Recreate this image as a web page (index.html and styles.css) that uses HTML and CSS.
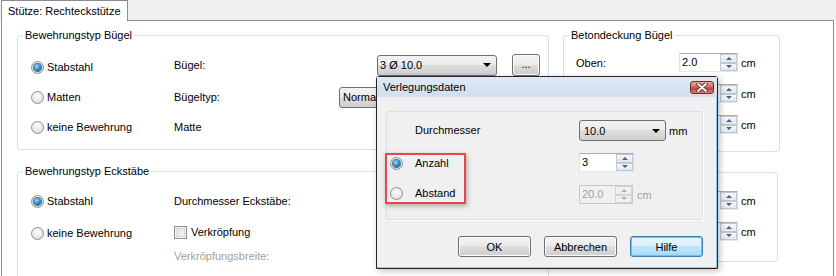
FILE: index.html
```html
<!DOCTYPE html>
<html lang="de">
<head>
    <meta charset="UTF-8">
    <title>Stütze: Rechteckstütze</title>
    <link rel="stylesheet" href="styles.css">
</head>
<body>
    <div class="window">
        <div class="tabs">
            <div class="tab">Stütze: Rechteckstütze</div>
        </div>
        <div class="panel">
            <div class="groups">
                <fieldset class="group group-buegel">
                    <legend>Bewehrungstyp Bügel</legend>
                    <div class="row row-first">
                        <label class="opt"><span class="radio on"></span>Stabstahl</label>
                        <span class="lbl lbl-buegel">Bügel:</span>
                        <span class="combo combo-stab">3 Ø 10.0</span>
                        <span class="btn btn-more">...</span>
                    </div>
                    <div class="row">
                        <label class="opt"><span class="radio"></span>Matten</label>
                        <span class="lbl lbl-typ">Bügeltyp:</span>
                        <span class="combo combo-typ">Normal</span>
                    </div>
                    <div class="row">
                        <label class="opt"><span class="radio"></span>keine Bewehrung</label>
                        <span class="lbl lbl-matte">Matte</span>
                    </div>
                </fieldset>

                <fieldset class="group group-deckung">
                    <legend>Betondeckung Bügel</legend>
                    <div class="field">
                        <span class="field-lbl">Oben:</span>
                        <span class="spin"><span class="spin-text">2.0</span><span class="spin-btns"><span class="spin-up"></span><span class="spin-down"></span></span></span>
                        <span class="unit">cm</span>
                    </div>
                    <!-- die folgenden Zeilen liegen unter dem Dialog -->
                    <div class="field">
                        <span class="field-lbl"></span>
                        <span class="spin"><span class="spin-text"></span><span class="spin-btns"><span class="spin-up"></span><span class="spin-down"></span></span></span>
                        <span class="unit">cm</span>
                    </div>
                    <div class="field field-last">
                        <span class="field-lbl"></span>
                        <span class="spin"><span class="spin-text"></span><span class="spin-btns"><span class="spin-up"></span><span class="spin-down"></span></span></span>
                        <span class="unit">cm</span>
                    </div>
                </fieldset>

                <fieldset class="group group-eck">
                    <legend>Bewehrungstyp Eckstäbe</legend>
                    <div class="eck">
                        <div class="eck-opts">
                            <label class="opt"><span class="radio on"></span>Stabstahl</label>
                            <label class="opt opt-second"><span class="radio"></span>keine Bewehrung</label>
                        </div>
                        <div class="eck-right">
                            <span class="lbl">Durchmesser Eckstäbe:</span>
                            <label class="chk-row"><span class="check"></span>Verkröpfung</label>
                            <span class="lbl lbl-off">Verkröpfungsbreite:</span>
                        </div>
                    </div>
                </fieldset>

                <fieldset class="group group-deckung2">
                    <div class="field">
                        <span class="field-lbl"></span>
                        <span class="spin"><span class="spin-text"></span><span class="spin-btns"><span class="spin-up"></span><span class="spin-down"></span></span></span>
                        <span class="unit">cm</span>
                    </div>
                    <div class="field field-wide">
                        <span class="field-lbl"></span>
                        <span class="spin"><span class="spin-text"></span><span class="spin-btns"><span class="spin-up"></span><span class="spin-down"></span></span></span>
                        <span class="unit">cm</span>
                    </div>
                </fieldset>
            </div>
        </div>

        <!-- modaler Dialog über dem Register -->
        <div class="dialog">
            <div class="dlg-title">
                <span>Verlegungsdaten</span>
                <span class="dlg-close">
                    <svg width="14" height="9" viewBox="0 0 14 9">
                        <path d="M3 1 L11 8 M11 1 L3 8" stroke="#5a2a24" stroke-width="3.6" stroke-linecap="round"/>
                        <path d="M3 1 L11 8 M11 1 L3 8" stroke="#fff" stroke-width="1.8" stroke-linecap="round"/>
                    </svg>
                </span>
            </div>
            <div class="dlg-body">
                <div class="dlg-group">
                    <div class="dlg-left">
                        <div class="dlg-lbl">Durchmesser</div>
                        <div class="highlight">
                            <label class="dlg-opt"><span class="radio on"></span>Anzahl</label>
                            <label class="dlg-opt dlg-opt-second"><span class="radio"></span>Abstand</label>
                        </div>
                    </div>
                    <div class="dlg-right">
                        <div class="dlg-line">
                            <span class="combo combo-dm">10.0</span>
                            <span class="unit">mm</span>
                        </div>
                        <div class="dlg-line dlg-line-count">
                            <span class="spin spin-count"><span class="spin-text">3</span><span class="spin-btns"><span class="spin-up"></span><span class="spin-down"></span></span></span>
                        </div>
                        <div class="dlg-line dlg-line-dist">
                            <span class="spin spin-dist off"><span class="spin-text">20.0</span><span class="spin-btns"><span class="spin-up"></span><span class="spin-down"></span></span></span>
                            <span class="unit unit-off">cm</span>
                        </div>
                    </div>
                </div>
                <div class="dlg-buttons">
                    <span class="btn btn-dlg">OK</span>
                    <span class="btn btn-dlg">Abbrechen</span>
                    <span class="btn btn-dlg btn-focus">Hilfe</span>
                </div>
            </div>
        </div>
    </div>
</body>
</html>
```

FILE: styles.css
```css
* {
    box-sizing: border-box;
}

body {
    margin: 0;
    background-color: #ffffff;
    font-family: "Liberation Sans", Arial, sans-serif;
    font-size: 11px;
    color: #000;
}

.window {
    position: relative;
    width: 836px;
    height: 276px;
    overflow: hidden;
    padding-left: 1px;
}

/* Registerleiste */
.tabs {
    height: 20px;
    margin-left: -1px;
    padding-left: 1px;
    background-color: #f0f0f0;
}

.tab {
    position: relative;
    width: 127px;
    height: 21px;
    padding-left: 6px;
    line-height: 20px;
    background-color: #fff;
    border: 1px solid #898c95;
    border-bottom: none;
}

.panel {
    width: 833px;
    height: 260px;
    padding: 7px 0 0 15px;
    border: 1px solid #898c95;
    background-color: #fff;
}

.groups {
    display: grid;
    grid-template-columns: 532px 217px;
    column-gap: 14px;
    row-gap: 12px;
    align-items: start;
}

/* Gruppenrahmen */
.group {
    margin: 0;
    padding: 0;
    min-width: 0;
    border: 1px solid #d5dfe5;
    border-radius: 3px;
}

.group legend {
    padding: 0 2px;
    line-height: 14px;
}

.group-buegel {
    height: 122px;
    padding: 15px 0 0 13px;
}

.group-buegel legend,
.group-eck legend {
    margin-left: -8px;
}

.group-deckung {
    height: 124px;
    padding: 11px 0 0 12px;
}

.group-deckung legend {
    margin-left: -7px;
}

.group-eck {
    height: 130px;
    padding: 13px 0 0 13px;
}

.group-deckung2 {
    width: 215px;
    height: 90px;
    margin-top: 8px;
    padding: 18px 0 0 12px;
}

.row {
    display: flex;
    align-items: center;
    height: 20px;
    margin-bottom: 10px;
}

.row-first .lbl,
.row-first .combo,
.row-first .btn {
    margin-top: -4px;
}

.opt {
    display: flex;
    align-items: center;
    width: 143px;
    flex: none;
}

.lbl-buegel { width: 203px; }
.lbl-typ { width: 165px; }

.lbl-off {
    color: #a0a0a0;
}

/* Optionsfelder */
.radio {
    display: inline-flex;
    align-items: center;
    justify-content: center;
    flex: none;
    width: 13px;
    height: 13px;
    margin-right: 3px;
    border: 1px solid #8e8f8f;
    border-radius: 50%;
    background: radial-gradient(circle at 50% 35%, #fdfdfd, #e4e4e4 65%, #cdcdcd);
}

.radio.on::after {
    content: "";
    width: 7px;
    height: 7px;
    border-radius: 50%;
    background: radial-gradient(circle at 38% 35%, #a5dcff, #2a7fc4 55%, #0c3e72);
    box-shadow: 0 0 0 1px #3b6f9a;
}

.check {
    display: inline-block;
    width: 13px;
    height: 13px;
    margin-right: 4px;
    border: 1px solid #8e8f8f;
    background: linear-gradient(135deg, #dcdcdc, #f8f8f8);
    box-shadow: inset 0 0 0 1px #f4f4f4, inset 0 0 0 2px #d8d8d8;
}

/* Kombifelder und Knöpfe */
.combo {
    display: flex;
    align-items: center;
    height: 21px;
    padding-left: 2px;
    border: 1px solid #707070;
    border-radius: 3px;
    background: linear-gradient(#f2f2f2 0%, #ebebeb 50%, #dddddd 50%, #cfcfcf 100%);
    white-space: nowrap;
    overflow: hidden;
}

.combo::after {
    content: "";
    margin-left: auto;
    margin-right: 5px;
    border-left: 4px solid transparent;
    border-right: 4px solid transparent;
    border-top: 4px solid #000;
}

.combo-stab { width: 120px; }
.combo-typ { width: 158px; padding-left: 3px; }
.combo-dm { width: 87px; padding-left: 4px; }

.btn {
    display: inline-flex;
    align-items: center;
    justify-content: center;
    border: 1px solid #707070;
    border-radius: 3px;
    background: linear-gradient(#f2f2f2 0%, #ebebeb 50%, #dddddd 50%, #cfcfcf 100%);
    box-shadow: inset 0 0 0 1px #fcfcfc;
}

.btn-more {
    width: 28px;
    height: 22px;
    margin-left: 15px;
    padding-bottom: 2px;
}

/* Drehfelder */
.field {
    display: flex;
    align-items: center;
    height: 19px;
    margin-bottom: 12px;
}

.field-last { margin-top: 2px; }
.field-wide { margin-top: 2px; }

.field-lbl {
    width: 103px;
}

.spin {
    display: flex;
    width: 59px;
    height: 19px;
    border: 1px solid #abadb3;
    border-color: #abadb3 #dbdfe6 #e3e9ef #e2e3ea;
    background-color: #fff;
}

.spin-text {
    flex: 1;
    padding-left: 2px;
    line-height: 17px;
}

.spin-btns {
    display: flex;
    flex-direction: column;
    width: 17px;
}

.spin-up,
.spin-down {
    flex: 1;
    display: flex;
    align-items: center;
    justify-content: center;
    border: 1px solid #c2c8d2;
    background: linear-gradient(#f5f7fa, #e2e7ee);
}

.spin-up::before {
    content: "";
    border-left: 3px solid transparent;
    border-right: 3px solid transparent;
    border-bottom: 3px solid #4d6185;
}

.spin-down::before {
    content: "";
    border-left: 3px solid transparent;
    border-right: 3px solid transparent;
    border-top: 3px solid #4d6185;
}

.unit {
    margin-left: 3px;
}

.unit-off {
    margin-left: 4px;
    color: #a0a0a0;
}

/* Eckstäbe */
.eck {
    display: flex;
}

.eck-opts {
    display: flex;
    flex-direction: column;
}

.eck-opts .opt {
    height: 20px;
}

.opt-second {
    margin-top: 12px;
}

.eck-right {
    display: flex;
    flex-direction: column;
}

.eck-right .lbl {
    line-height: 20px;
}

.chk-row {
    display: flex;
    align-items: center;
    height: 20px;
    margin-top: 11px;
}

.eck-right .lbl-off {
    margin-top: 4px;
}

/* Dialog */
.dialog {
    position: absolute;
    left: 376px;
    top: 76px;
    width: 342px;
    height: 193px;
    border: 1px solid #262626;
    border-radius: 3px 3px 0 0;
    background-color: #f0f0f0;
    box-shadow: inset -1px -1px 0 #8fcaf0, 2px 2px 6px rgba(0, 0, 0, 0.25);
}

.dlg-title {
    display: flex;
    align-items: center;
    height: 20px;
    padding: 0 3px 0 6px;
    background: linear-gradient(#dfe9f5, #d0def0);
}

.dlg-close {
    display: flex;
    align-items: center;
    justify-content: center;
    width: 24px;
    height: 13px;
    margin-left: auto;
    border: 1px solid #6b3028;
    border-radius: 3px;
    background: linear-gradient(#e6a99f 0%, #d06c5f 45%, #bb4133 55%, #d5826f 100%);
}

.dlg-body {
    padding: 14px 14px 0 9px;
}

.dlg-group {
    display: flex;
    height: 109px;
    padding-top: 8px;
    border: 1px solid #d5dfe5;
    border-radius: 3px;
    box-shadow: 1px 1px 0 #fff;
}

.dlg-left {
    width: 192px;
}

.dlg-lbl {
    height: 21px;
    line-height: 21px;
    padding-left: 28px;
}

.highlight {
    width: 81px;
    margin: 12px 0 0 -2px;
    padding: 0 0 1px 3px;
    border: 2px solid #e5494b;
    box-shadow: 1px 2px 5px rgba(0, 0, 0, 0.3);
}

.dlg-opt {
    display: flex;
    align-items: center;
    height: 16px;
}

.dlg-opt .radio {
    margin-right: 12px;
}

.dlg-opt-second {
    margin-top: 14px;
}

.dlg-line {
    display: flex;
    align-items: center;
}

.dlg-line-count { margin-top: 12px; }
.dlg-line-dist { margin-top: 13px; }

.spin-count { width: 55px; }

.spin-dist { width: 54px; }

.spin.off {
    background-color: #f0f0f0;
    border-color: #c9c9c9;
    color: #a0a0a0;
}

.spin.off .spin-up,
.spin.off .spin-down {
    border-color: #d4d4d4;
    background: #f0f0f0;
}

.spin.off .spin-up::before { border-bottom-color: #b0b0b0; }
.spin.off .spin-down::before { border-top-color: #b0b0b0; }

.dlg-buttons {
    display: flex;
    justify-content: flex-end;
    gap: 13px;
    margin-top: 16px;
}

.btn-dlg {
    width: 73px;
    height: 21px;
}

.btn-focus {
    border-color: #3c7fb1;
    background: linear-gradient(#eaf6fd 0%, #d9f0fc 50%, #bee6fd 50%, #a7d9f5 100%);
    box-shadow: inset 0 0 0 1px #48d1ff;
}
```
